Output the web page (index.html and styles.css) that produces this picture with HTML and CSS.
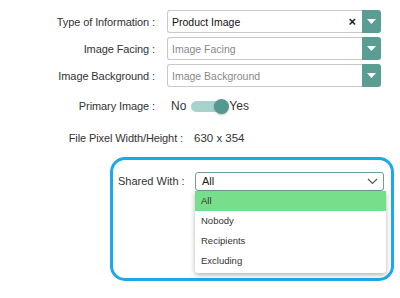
FILE: index.html
```html
<!DOCTYPE html>
<html>
<head>
<meta charset="utf-8">
<link rel="stylesheet" href="styles.css">
</head>
<body>
<div class="form">
  <div class="row">
    <div class="label">Type of Information :</div>
    <div class="combo">
      <div class="field value">Product Image<span class="clear">×</span></div>
      <div class="btn"><svg width="9" height="5" viewBox="0 0 9 5"><path d="M0 0H9L4.5 5Z" fill="#fff"/></svg></div>
    </div>
  </div>
  <div class="row">
    <div class="label">Image Facing :</div>
    <div class="combo">
      <div class="field placeholder">Image Facing</div>
      <div class="btn"><svg width="9" height="5" viewBox="0 0 9 5"><path d="M0 0H9L4.5 5Z" fill="#fff"/></svg></div>
    </div>
  </div>
  <div class="row">
    <div class="label">Image Background :</div>
    <div class="combo">
      <div class="field placeholder">Image Background</div>
      <div class="btn"><svg width="9" height="5" viewBox="0 0 9 5"><path d="M0 0H9L4.5 5Z" fill="#fff"/></svg></div>
    </div>
  </div>
  <div class="row row-toggle">
    <div class="label">Primary Image :</div>
    <div class="toggle-wrap">
      <span class="opt">No</span>
      <span class="toggle"><span class="knob"></span></span>
      <span class="opt">Yes</span>
    </div>
  </div>
  <div class="row row-info">
    <div class="label label-wide">File Pixel Width/Height :</div>
    <div class="info">630 x 354</div>
  </div>
  <div class="shared">
    <div class="shared-label">Shared With :</div>
    <div class="select-wrap">
      <div class="select">All
        <svg class="chev" width="11" height="7" viewBox="0 0 11 7"><path d="M1 1L5.5 5.5L10 1" fill="none" stroke="#555" stroke-width="1.2"/></svg>
      </div>
      <ul class="menu">
        <li class="active">All</li>
        <li>Nobody</li>
        <li>Recipients</li>
        <li>Excluding</li>
      </ul>
    </div>
  </div>
</div>
</body>
</html>
```

FILE: styles.css
```css
* { box-sizing: border-box; }
html, body { margin: 0; padding: 0; background: #fff; }
body {
  font-family: "Liberation Sans", Arial, sans-serif;
  color: #333;
  width: 400px;
  height: 298px;
  overflow: hidden;
}
.form { padding-top: 10px; }
.row {
  display: flex;
  align-items: center;
  height: 23px;
  margin-bottom: 4px;
}
.label {
  width: 155px;
  text-align: right;
  font-size: 11px;
  color: #333;
  letter-spacing: -0.1px;
  flex: none;
}
.combo {
  display: flex;
  margin-left: 12px;
  width: 214px;
  height: 23px;
}
.field {
  flex: 1;
  border: 1px solid #c9c9c9;
  border-right: none;
  border-radius: 3px 0 0 3px;
  display: flex;
  align-items: center;
  padding-left: 4px;
  font-size: 10.5px;
  position: relative;
}
.value { color: #111; }
.placeholder { color: #888; }
.clear {
  position: absolute;
  right: 6px;
  top: 4px;
  font-size: 13px;
  font-weight: bold;
  color: #222;
  line-height: 13px;
}
.btn {
  width: 19px;
  background: #5a9d93;
  border-radius: 0 3px 3px 0;
  display: flex;
  align-items: center;
  justify-content: center;
}
.row-toggle { margin-top: 8px; height: 22px; }
.toggle-wrap {
  display: flex;
  align-items: center;
  margin-left: 16px;
}
.opt { font-size: 12px; color: #333; }
.toggle {
  position: relative;
  width: 34px;
  height: 11px;
  background: #a8d2cc;
  border-radius: 6px;
  margin-left: 5px;
}
.knob {
  position: absolute;
  right: -4px;
  top: -2px;
  width: 15px;
  height: 15px;
  border-radius: 50%;
  background: #54998f;
  box-shadow: 0 1px 2px rgba(0,0,0,0.25);
}
.toggle + .opt { margin-left: 4px; }
.row-info { margin-top: 10px; height: 22px; }
.label-wide { width: 183px; }
.info { margin-left: 11px; font-size: 11.5px; color: #333; }
.shared {
  margin-top: 8px;
  margin-left: 110px;
  width: 284px;
  height: 124px;
  border: 3px solid #1aa8ee;
  border-radius: 15px;
  display: flex;
  padding: 12px 7px 0 5px;
}
.shared-label {
  font-size: 11px;
  color: #333;
  width: 77px;
  height: 18px;
  line-height: 18px;
}
.select-wrap {
  position: relative;
  flex: 1;
}
.select {
  height: 19px;
  border: 1px solid #6f9e9b;
  border-radius: 3px;
  font-size: 11px;
  color: #222;
  padding-left: 6px;
  line-height: 17px;
  position: relative;
}
.chev {
  position: absolute;
  right: 5px;
  top: 5px;
}
.menu {
  position: absolute;
  left: 0;
  right: -2px;
  top: 19px;
  margin: 0;
  padding: 0 0 2px 0;
  list-style: none;
  background: #fff;
  box-shadow: 0 2px 5px rgba(0,0,0,0.3);
  border-radius: 0 0 3px 3px;
}
.menu li {
  height: 20px;
  line-height: 20px;
  padding-left: 6px;
  font-size: 9.5px;
  color: #333;
}
.menu li.active { background: #77de8b; }
```
